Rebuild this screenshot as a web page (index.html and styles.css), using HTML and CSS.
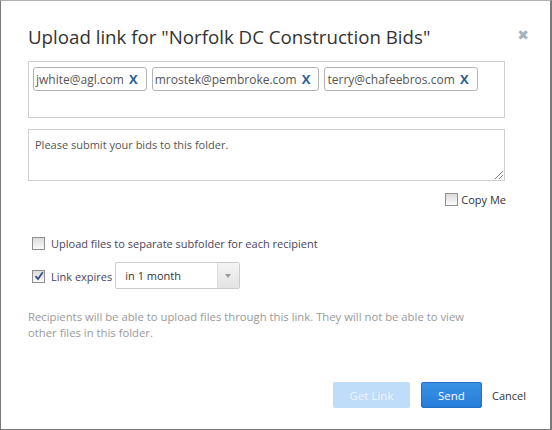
FILE: index.html
```html
<!DOCTYPE html>
<html>
<head>
<meta charset="utf-8">
<link rel="stylesheet" href="styles.css">
</head>
<body>
<div class="dialog">
  <div class="header">
    <h1 class="title">Upload link for "Norfolk DC Construction Bids"</h1>
    <span class="close">&#x2716;</span>
  </div>
  <div class="recipients">
    <span class="tag">jwhite@agl.com <b class="x">X</b></span>
    <span class="tag">mrostek@pembroke.com <b class="x">X</b></span>
    <span class="tag">terry@chafeebros.com <b class="x">X</b></span>
  </div>
  <div class="message">Please submit your bids to this folder.<span class="grip"></span></div>
  <div class="copyme"><span class="cb"></span>Copy Me</div>
  <div class="opt opt1"><span class="cb"></span>Upload files to separate subfolder for each recipient</div>
  <div class="opt opt2"><span class="cb checked"><svg width="10" height="10" viewBox="0 0 10 10"><path d="M1.5 5.2 L4 8 L8.8 1.2" fill="none" stroke="#3b4a8f" stroke-width="1.8"/></svg></span>Link expires
    <span class="select"><span class="sel-text">in 1 month</span><span class="sel-arrow"></span></span>
  </div>
  <p class="help">Recipients will be able to upload files through this link. They will not be able to view<br>other files in this folder.</p>
  <div class="footer">
    <span class="btn disabled">Get Link</span>
    <span class="btn primary">Send</span>
    <span class="cancel">Cancel</span>
  </div>
</div>
</body>
</html>
```
FILE: styles.css
```css
html, body { margin: 0; padding: 0; background: #fff; }
body { font-family: "Open Sans", "DejaVu Sans", sans-serif; }
.dialog {
  width: 552px; height: 430px; box-sizing: border-box;
  border: 1px solid #7a7a7a; border-top-color: #b0b0b0; border-right-width: 2px;
  padding: 0 0 0 27px; position: relative;
}
.header { display: flex; align-items: center; height: 69px; }
.title { margin: 0; font-weight: 400; font-size: 18.7px; color: #333; letter-spacing: 0; padding-top: 1px; }
.close { position: absolute; right: 21px; top: 26px; color: #a4b3c1; font-size: 14px; font-family: "DejaVu Sans", sans-serif; }
.recipients {
  width: 477px; height: 57px; box-sizing: border-box; margin-top: -9px;
  border: 1px solid #cfcfcf; padding: 5px 4px; display: flex; gap: 5px; align-items: flex-start;
}
.tag {
  height: 24px; box-sizing: border-box; border: 1px solid #b3b3b3; border-radius: 3px;
  font-size: 12px; color: #555; padding: 0 8px 0 2px; display: flex; align-items: center; gap: 0;
  white-space: pre;
}
.tag .x { color: #2c5f95; font-weight: 700; font-size: 13px; margin-left: 2px; }
.message {
  width: 477px; height: 52px; box-sizing: border-box; margin-top: 11px;
  border: 1px solid #cfcfcf; font-size: 11px; color: #555; padding: 7px 6px; position: relative;
}
.grip { position: absolute; right: 1px; bottom: 1px; width: 8px; height: 8px;
  background: linear-gradient(135deg, transparent 45%, #888 45%, #888 55%, transparent 55%, transparent 70%, #888 70%, #888 80%, transparent 80%); }
.copyme { display: flex; justify-content: flex-end; align-items: center; width: 478px; margin-top: 11px; font-size: 11px; color: #333; }
.cb { width: 11px; height: 11px; border: 1px solid #8f8f8f; background: linear-gradient(#dcdcdc, #fafafa); display: inline-flex; align-items: center; justify-content: center; margin-right: 3px; }
.opt { display: flex; align-items: center; font-size: 11px; color: #4a4458; margin-left: 4px; }
.opt .cb { margin-right: 6px; }
.opt1 { margin-top: 29px; }
.opt2 { margin-top: 12px; }
.select { margin-left: 3px; width: 125px; height: 27px; box-sizing: border-box; border: 1px solid #ccc; border-radius: 2px; display: flex; align-items: center; margin-top: -1px; }
.sel-text { flex: 1; font-size: 11px; color: #333; padding-left: 9px; }
.sel-arrow { width: 21px; height: 25px; background: linear-gradient(#f4f4f4, #e4e4e4); border-left: 1px solid #ddd; position: relative; }
.sel-arrow::after { content: ""; position: absolute; left: 7px; top: 11px; border-left: 3px solid transparent; border-right: 3px solid transparent; border-top: 4px solid #999; }
.help { margin: 20px 0 0 0; font-size: 11.3px; line-height: 16px; color: #999; }
.footer { position: absolute; right: 24px; bottom: 21px; display: flex; align-items: center; }
.btn { height: 26px; box-sizing: border-box; border-radius: 2px; font-size: 11.5px; color: #fff; display: flex; align-items: center; justify-content: center; }
.disabled { width: 77px; background: #bfdcf8; color: #eef6fe; }
.primary { width: 61px; margin-left: 11px; background: linear-gradient(#3a92e6, #267dd8); border: 1px solid #2170c4; }
.cancel { margin-left: 10px; font-size: 11px; color: #333; }
```
